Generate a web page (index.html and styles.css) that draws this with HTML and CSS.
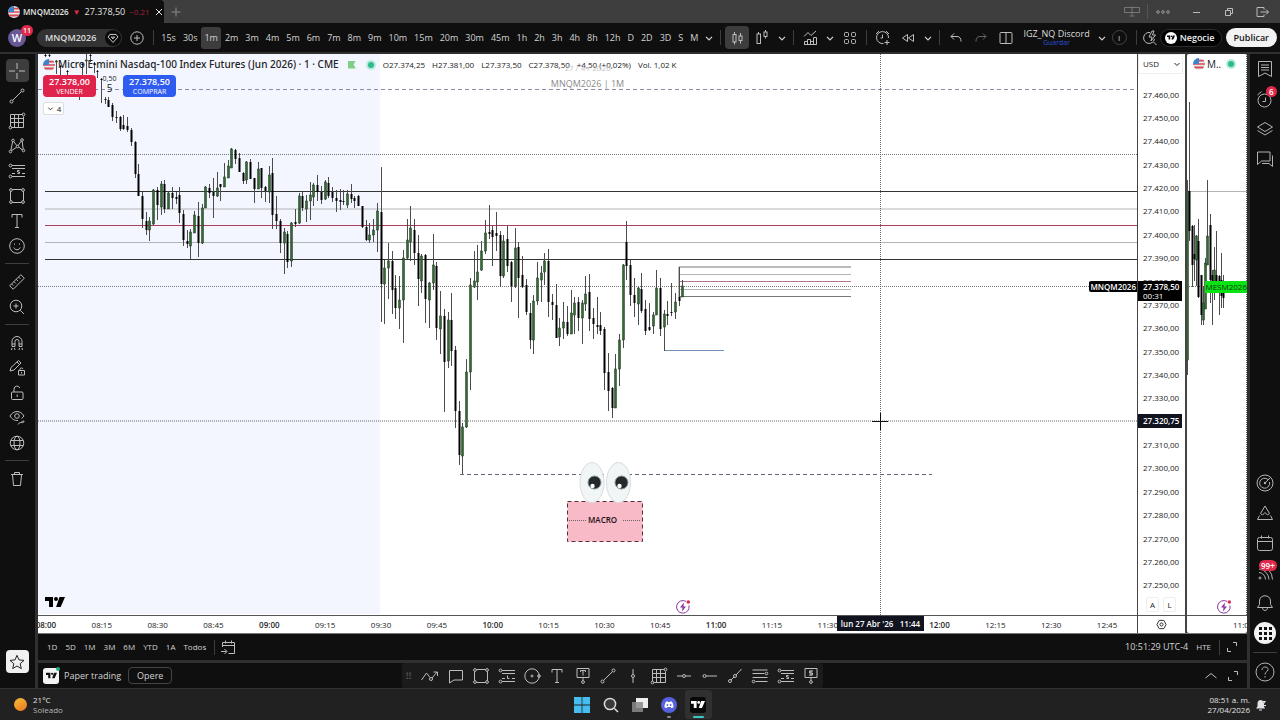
FILE: index.html
```html
<!DOCTYPE html>
<html lang="es">
<head>
<meta charset="utf-8">
<title>MNQM2026 27.378,50</title>
<link rel="stylesheet" href="styles.css">
</head>
<body>
<svg class="sprite" aria-hidden="true">
  <symbol id="cross" viewBox="0 0 18 18"><path d="M9 1v6M9 11v6M1 9h6M11 9h6"/></symbol>
  <symbol id="line" viewBox="0 0 18 18"><circle cx="3.500" cy="14.500" r="1.500"/><circle cx="14.500" cy="3.500" r="1.500"/><path d="M4.600 13.400 13.400 4.600"/></symbol>
  <symbol id="gridtool" viewBox="0 0 18 18"><path d="M2.500 2.500h12M2.500 2.500v12M2.500 6.500h13M2.500 10.500h13M3.500 15.500h12v-11M6.500 2.500v13M10.500 2.500v13"/><circle cx="2.500" cy="15.500" r="1.400"/><circle cx="15.500" cy="2.500" r="1.400"/></symbol>
  <symbol id="pattern" viewBox="0 0 18 18"><circle cx="5" cy="3.500" r="1.300"/><circle cx="14" cy="3" r="1.300"/><circle cx="2.500" cy="14.500" r="1.300"/><circle cx="9.500" cy="9.500" r="1.300"/><circle cx="15.500" cy="13.500" r="1.300"/><path d="M4.600 4.700 2.900 13.200M5.700 4.600l3 3.800M13.200 4.100l-3 4.300M14.200 4.400l1 7.800M3.500 13.600l5-3.300M10.700 10l3.700 3"/></symbol>
  <symbol id="longpos" viewBox="0 0 18 18"><circle cx="2.500" cy="3.500" r="1.400"/><circle cx="2.500" cy="14.500" r="1.400"/><path d="M4 3.500h13M4 14.500h13M4 6.500h13M9.500 8.500v3h2M14 11.500h3M4 11.500h3"/></symbol>
  <symbol id="shortpos" viewBox="0 0 18 18"><circle cx="2.500" cy="3.500" r="1.400"/><circle cx="2.500" cy="14.500" r="1.400"/><path d="M4 3.500h13M4 14.500h13M4 6.500h13M11.500 8.500h-2v1.500h2v1.500h-2M14 11.500h3M4 11.500h3"/></symbol>
  <symbol id="rect" viewBox="0 0 18 18"><circle cx="3" cy="3" r="1.400"/><circle cx="15" cy="3" r="1.400"/><circle cx="3" cy="15" r="1.400"/><circle cx="15" cy="15" r="1.400"/><path d="M4.400 2.500h9.200M4.400 15.500h9.200M2.500 4.400v9.200M15.500 4.400v9.200"/></symbol>
  <symbol id="text" viewBox="0 0 18 18"><path d="M4 5.500v-3h10v3M9 2.500v13M7 15.500h4"/></symbol>
  <symbol id="smile" viewBox="0 0 18 18"><circle cx="9" cy="9" r="7.300"/><path d="M5.800 10.500c1 3 5.400 3 6.400 0M6.500 6.500v1.200M11.500 6.500v1.200"/></symbol>
  <symbol id="ruler" viewBox="0 0 18 18"><path d="M12.800 1.700l3.500 3.500L5.200 16.300l-3.500-3.500zM10.500 4l1.800 1.800M8.200 6.300l1.800 1.800M5.900 8.600l1.800 1.800M3.600 10.900l1.800 1.800"/></symbol>
  <symbol id="zoomin" viewBox="0 0 18 18"><circle cx="8" cy="8" r="5.800"/><path d="M12.200 12.200l3.800 3.800M8 5.500v5M5.500 8h5"/></symbol>
  <symbol id="magnet" viewBox="0 0 18 18"><path d="M4 12.500v-5a5 5 0 0 1 10 0v5h-3v-5a2 2 0 0 0-4 0v5zM4 10h3M11 10h3M4 14l-.5 2M6.500 14l.5 2M11.500 14l-.5 2M14 14l.5 2"/></symbol>
  <symbol id="pencillock" viewBox="0 0 18 18"><path d="M2 12l1-3.500L10.500 1.500l2.500 2.500-7 7zM9 3l2.500 2.500M10.500 11.500h6v4.500h-6zM12 11.500v-1.500a1.600 1.600 0 0 1 3 0M13.500 13v1.500"/></symbol>
  <symbol id="lock" viewBox="0 0 18 18"><rect x="3.500" y="8" width="11.500" height="7.500" rx="1"/><path d="M6 8V5a3 3 0 0 1 5.800-1M9.200 10.500v2.500"/></symbol>
  <symbol id="eye" viewBox="0 0 18 18"><path d="M13.500 9.500c1-.8 1.800-1.500 2.500-2.500-3.500-6-10.500-6-14 0 2 3.500 5 4.700 8 4.500M10 15.500c2-4 6 0 6-3.500-1 0-2 .5-3 1.500"/><circle cx="9" cy="7" r="2.300"/></symbol>
  <symbol id="globe" viewBox="0 0 18 18"><circle cx="9" cy="9" r="6.800"/><ellipse cx="9" cy="9" rx="3" ry="6.800"/><path d="M2.800 6.500h12.400M2.800 11.500h12.400"/></symbol>
  <symbol id="trash" viewBox="0 0 18 18"><path d="M3 4.500h12M6.500 4.500v-2h5v2M4.500 4.500l1 11h7l1-11"/></symbol>
  <symbol id="star" viewBox="0 0 18 18"><path d="M9 2.300l2 4.600 5 .5-3.800 3.300 1.100 4.900L9 13l-4.300 2.600 1.100-4.900L2 7.400l5-.5z"/></symbol>
  <symbol id="plusc" viewBox="0 0 18 18"><circle cx="9" cy="9" r="6.200"/><path d="M9 6v6M6 9h6"/></symbol>
  <symbol id="chev" viewBox="0 0 10 10"><path d="M2.500 4 5 6.500 7.500 4"/></symbol>
  <symbol id="candles" viewBox="0 0 18 18"><path d="M6.500 3v3M6.500 12.500v3M12.500 4v3M12.500 11.500v3"/><rect x="5" y="5.500" width="3" height="7.500"/><rect x="11" y="7" width="3" height="4.500"/></symbol>
  <symbol id="candles2" viewBox="0 0 18 18"><path d="M5.500 3v2M12.500 1v2M12.500 7.500v2"/><rect x="4" y="5" width="3.500" height="9.500"/><rect x="11" y="3" width="3" height="4.500"/></symbol>
  <symbol id="indic" viewBox="0 0 18 18"><path d="M3 7.500 7 3.500l3 3 5-4.500M3.500 15.500v-3h3v3M6.500 15.500v-5h3v5M9.500 12.500h3v3M12.500 15.500v-7h3v7zM3 15.500h12.500"/></symbol>
  <symbol id="tiles" viewBox="0 0 18 18"><rect x="3.500" y="3.500" width="4" height="4" rx="1"/><rect x="10.500" y="3.500" width="4" height="4" rx="1"/><rect x="3.500" y="10.500" width="4" height="4" rx="1"/><rect x="10.500" y="10.500" width="4" height="4" rx="1"/></symbol>
  <symbol id="alertplus" viewBox="0 0 18 18"><path d="M14.500 9A6 6 0 1 0 9.500 14.500M8.500 5.500v3.500h-2M2 5l3-3M12 2l3 3M13 11v5M10.500 13.500h5"/></symbol>
  <symbol id="rewind" viewBox="0 0 18 18"><path d="M8.500 5.500v7l-5-3.500zM14.500 5.500v7l-5-3.500z"/></symbol>
  <symbol id="undo" viewBox="0 0 18 18"><path d="M7 4.500 4 7.500l3 3M4 7.500h6c3 0 4 2 4 5"/></symbol>
  <symbol id="redo" viewBox="0 0 18 18"><path d="M11 4.500l3 3-3 3M14 7.500H8c-3 0-4 2-4 5"/></symbol>
  <symbol id="split" viewBox="0 0 18 18"><rect x="3" y="3.500" width="12" height="11" rx="1"/><path d="M9 3.500v11"/></symbol>
  <symbol id="quick" viewBox="0 0 18 18"><path d="M9 3.500A5.500 5.500 0 1 0 13.500 10M12.500 13l3 3M11 2 8 8h3l-1 4 4.500-6h-3l1.500-4z"/></symbol>
  <symbol id="tv" viewBox="0 0 20 12"><path class="solid" d="M0 1h8v10H4V5H0zM14.500 1H20l-4.300 10h-4.600z"/><circle class="solid" cx="11" cy="3" r="2"/></symbol>
  <symbol id="flag" viewBox="0 0 14 14"><circle class="f-w" cx="7" cy="7" r="7"/><path class="f-r" d="M7 2h5a7 7 0 0 1 1.300 2H7zM7 6h7v2H0V7h7zM1 10h12a7 7 0 0 1-1.600 2.300H2.600A7 7 0 0 1 1 10z"/><path class="f-b" d="M7 0v7H0A7 7 0 0 1 7 0z"/></symbol>
  <symbol id="book" viewBox="0 0 18 18"><path d="M2.500 1.500h13v15L9 13l-6.500 3.500zM5 5h8M5 7.500h8M5 10h8"/></symbol>
  <symbol id="alarm" viewBox="0 0 18 18"><circle cx="8.500" cy="10.500" r="6.500"/><path d="M9.500 7.500v4h-3M1.500 5l4-3.500"/></symbol>
  <symbol id="layers" viewBox="0 0 18 18"><path d="M9 2.500l7.500 4.500L9 11.500 1.500 7zM1.500 10.500 9 15l7.500-4.500"/></symbol>
  <symbol id="chat" viewBox="0 0 18 18"><path d="M1.500 2h12.500v9H5.500l-4 3.500zM16.500 5.500v11l-3.500-3H6"/></symbol>
  <symbol id="target" viewBox="0 0 18 18"><circle cx="9" cy="9" r="8"/><path d="M12 5.500A5 5 0 1 0 13.500 8M9 9l5.500-5.500"/><circle class="solid" cx="9" cy="9" r="1.200"/></symbol>
  <symbol id="hill" viewBox="0 0 18 18"><path d="M4.500 9.500 9 2l4.500 7.500-2 1.500-2.500-2.500L6.500 11zM3.500 11.500l-2 4h15l-2-4"/></symbol>
  <symbol id="cal" viewBox="0 0 18 18"><rect x="1.500" y="3.500" width="15" height="13" rx="2"/><path d="M1.500 7.500h15M5.500 1.500v3M12.500 1.500v3"/></symbol>
  <symbol id="rss" viewBox="0 0 18 18"><path d="M3 8.500a7 7 0 0 1 6.500 7M3 5a11 11 0 0 1 10 10.500M3 1.500a14 14 0 0 1 13.500 14"/><circle cx="4" cy="14" r="1"/></symbol>
  <symbol id="bell" viewBox="0 0 18 18"><path d="M1.500 13.500h15l-2-3V7c0-7-11-7-11 0v3.500zM6.500 13.500c0 4 5 4 5 0"/></symbol>
  <symbol id="dots9" viewBox="0 0 22 22"><path class="solid" d="M5 5h3v3H5zM10 5h3v3h-3zM15 5h3v3h-3zM5 10h3v3H5zM10 10h3v3h-3zM15 10h3v3h-3zM5 15h3v3H5zM10 15h3v3h-3zM15 15h3v3h-3z"/></symbol>
  <symbol id="help" viewBox="0 0 20 20"><circle cx="10" cy="10" r="9"/><path d="M7 8c0-4 6-4 6-.5C13 10 10 9.500 10 12.500M10 14v1.500"/></symbol>
  <symbol id="goto" viewBox="0 0 18 18"><path d="M3.500 9V4.500h12v11h-6M3.500 7.500h12M6.500 2.500v3M12.500 2.500v3M2 13.500h5.500M5.500 11l2.500 2.500L5.500 16"/></symbol>
  <symbol id="expand" viewBox="0 0 14 14"><path d="M8 2.500h3.500V6M2.500 8v3.500H6"/></symbol>
  <symbol id="up" viewBox="0 0 14 14"><path d="M1.500 9 7 4.500 12.500 9"/></symbol>
  <symbol id="zigzag" viewBox="0 0 18 18"><path d="M.5 13 5.500 6l3.500 4.500M11 11l5-6M12.500 5H16.500v4"/><circle cx="10" cy="12" r="1.500"/></symbol>
  <symbol id="note" viewBox="0 0 18 18"><path d="M2.500 3.500h13v9.500H7L2.500 16z"/></symbol>
  <symbol id="circ" viewBox="0 0 18 18"><circle cx="9" cy="9" r="7.200"/><circle cx="9" cy="9" r="1"/><circle cx="16" cy="9" r="1.300"/></symbol>
  <symbol id="callout" viewBox="0 0 18 18"><path d="M3 1.500h12v9H3zM6.500 5V3.500h5V5M9 3.500v5M9 10.500v3"/><circle cx="9" cy="15" r="1.400"/></symbol>
  <symbol id="vline" viewBox="0 0 18 18"><circle cx="9" cy="9" r="1.500"/><path d="M9 2v5.500M9 10.500V16"/></symbol>
  <symbol id="hline" viewBox="0 0 18 18"><circle cx="9" cy="9" r="1.500"/><path d="M2 9h5.500M10.500 9H16"/></symbol>
  <symbol id="hray" viewBox="0 0 18 18"><circle cx="3.500" cy="9" r="1.500"/><path d="M5 9h11"/></symbol>
  <symbol id="ray" viewBox="0 0 18 18"><circle cx="4" cy="14" r="1.500"/><circle cx="9" cy="9" r="1.500"/><path d="M5 13l3-3M10 8l5.500-6"/></symbol>
  <symbol id="fib" viewBox="0 0 18 18"><path d="M1.500 3h15M1.500 6.500h12M1.500 10.500h15M4.500 14.500h12"/><circle cx="15.500" cy="6.500" r="1.300"/><circle cx="2.500" cy="14.500" r="1.300"/></symbol>
  <symbol id="price" viewBox="0 0 18 18"><path d="M3 1.500h12v9H3zM11 4H7.500v2h3v2H7M9 3v6M9 10.500v3"/><circle cx="9" cy="15" r="1.400"/></symbol>
  <symbol id="bolt" viewBox="0 0 16 16"><path d="M11 2.400A6.300 6.300 0 1 0 14 6.500"/><path class="bolt" d="M9 3.500 5 8.500h2.500L7 12.500l4-5H8.500z"/><circle class="reddot" cx="13.300" cy="3" r="1.800"/></symbol>
</svg>

<header class="tabbar">
  <button class="tab"><svg class="flag"><use href="#flag"/></svg><b>MNQM2026</b><i class="down">▼</i><span>27.378,50</span><span class="fade">−0.21</span><svg class="x" viewBox="0 0 10 10"><path d="M2 2l6 6M8 2 2 8"/></svg></button>
  <button class="newtab" aria-label="Nueva pestaña"><svg viewBox="0 0 10 10"><path d="M5 .5v9M.5 5h9"/></svg></button>
  <div class="winctl">
    <svg class="wi" viewBox="0 0 16 12"><path d="M.5 1.500h15v5H.5zM8 .500v9M5.500 10h5"/></svg><i class="vdiv"></i>
    <svg class="wi dim" viewBox="0 0 16 12"><circle cx="3" cy="6" r="1.300"/><circle cx="8" cy="6" r="1.300"/><circle cx="13" cy="6" r="1.300"/></svg>
    <svg class="wi lite" viewBox="0 0 16 12"><path d="M5 6.500h7"/></svg>
    <svg class="wi lite" viewBox="0 0 16 12"><path d="M4.500 4.500h5v5h-5zM6.500 4.500v-2h5v5h-2"/></svg>
    <svg class="wi lite" viewBox="0 0 16 12"><path d="M10 3.500v-2H3v9h7v-2M6.500 6h8M12 3.500 14.500 6 12 8.500"/></svg>
  </div>
</header>

<nav class="toolbar">
  <div class="avatar">W<span class="badge">11</span></div>
  <button class="pill">MNQM2026<span class="gem"><svg viewBox="0 0 18 18"><path d="M5.500 5h7l2 3L9 14 3.500 8zM7 8l2 2 2-2z"/></svg></span></button>
  <button class="ib plus" aria-label="Comparar"><svg><use href="#plusc"/></svg></button>
  <i class="vdiv"></i>
  <div class="frames">
    <button>15s</button><button>30s</button><button class="on">1m</button><button>2m</button><button>3m</button><button>4m</button><button>5m</button><button>6m</button><button>7m</button><button>8m</button><button>9m</button><button>10m</button><button>15m</button><button>20m</button><button>30m</button><button>45m</button><button>1h</button><button>2h</button><button>3h</button><button>4h</button><button>8h</button><button>12h</button><button>D</button><button>2D</button><button>3D</button><button>S</button><button>M</button><button class="cv" aria-label="Más"><svg><use href="#chev"/></svg></button>
  </div>
  <i class="vdiv"></i>
  <button class="ib on" aria-label="Velas"><svg><use href="#candles"/></svg></button>
  <button class="ib" aria-label="Tipo"><svg><use href="#candles2"/></svg></button>
  <button class="cv" aria-label="Más"><svg><use href="#chev"/></svg></button>
  <i class="vdiv"></i>
  <button class="ib" aria-label="Indicadores"><svg><use href="#indic"/></svg></button>
  <button class="cv" aria-label="Más"><svg><use href="#chev"/></svg></button>
  <button class="ib" aria-label="Plantillas"><svg><use href="#tiles"/></svg></button>
  <i class="vdiv"></i>
  <button class="ib" aria-label="Alerta"><svg><use href="#alertplus"/></svg></button>
  <button class="ib" aria-label="Repetir"><svg><use href="#rewind"/></svg></button>
  <button class="cv" aria-label="Más"><svg><use href="#chev"/></svg></button>
  <i class="vdiv"></i>
  <button class="ib" aria-label="Deshacer"><svg><use href="#undo"/></svg></button>
  <button class="ib dim" aria-label="Rehacer"><svg><use href="#redo"/></svg></button>
  <button class="ib" aria-label="Diseño"><svg><use href="#split"/></svg></button>
  <button class="layout"><span>IGZ_NQ Discord</span><small>Guardar</small></button>
  <button class="cv" aria-label="Más"><svg><use href="#chev"/></svg></button>
  <button class="ring">I</button>
  <i class="vdiv"></i>
  <button class="ib slim" aria-label="Buscar"><svg><use href="#quick"/></svg></button>
  <button class="trade"><span class="tvc"><svg><use href="#tv"/></svg></span>Negocie</button>
  <button class="publish">Publicar</button>
</nav>

<div class="body">
  <aside class="left">
    <button class="ib on" aria-label="Cursor"><svg><use href="#cross"/></svg></button>
    <button class="ib" aria-label="Línea"><svg><use href="#line"/></svg></button>
    <button class="ib" aria-label="Gann"><svg><use href="#gridtool"/></svg></button>
    <button class="ib" aria-label="Patrones"><svg><use href="#pattern"/></svg></button>
    <button class="ib" aria-label="Posición"><svg><use href="#shortpos"/></svg></button>
    <button class="ib" aria-label="Rectángulo"><svg><use href="#rect"/></svg></button>
    <button class="ib" aria-label="Texto"><svg><use href="#text"/></svg></button>
    <button class="ib" aria-label="Iconos"><svg><use href="#smile"/></svg></button>
    <i class="hdiv"></i>
    <button class="ib" aria-label="Regla"><svg><use href="#ruler"/></svg></button>
    <button class="ib" aria-label="Acercar"><svg><use href="#zoomin"/></svg></button>
    <i class="hdiv"></i>
    <button class="ib" aria-label="Imán"><svg><use href="#magnet"/></svg></button>
    <button class="ib" aria-label="Dibujar"><svg><use href="#pencillock"/></svg></button>
    <button class="ib" aria-label="Bloquear"><svg><use href="#lock"/></svg></button>
    <button class="ib" aria-label="Ocultar"><svg><use href="#eye"/></svg></button>
    <button class="ib" aria-label="Sincronizar"><svg><use href="#globe"/></svg></button>
    <i class="hdiv"></i>
    <button class="ib" aria-label="Eliminar"><svg><use href="#trash"/></svg></button>
    <button class="ib fav" aria-label="Favoritos"><svg><use href="#star"/></svg></button>
  </aside>

  <main class="center">
    <div class="charts">
      <section class="chart">
        <div class="plot">
          <svg class="canvas" viewBox="38 54 1099 561" preserveAspectRatio="none">
            <rect class="session" x="38" y="54" width="342" height="560"/>
            <path class="dash" d="M38 89.500H1134"/>
            <path class="dots" d="M38 154.500H1137M38 286.500H1137"/>
            <path class="lv" d="M45 191.500H1137M45 259.500H1137"/>
            <path class="lv gray" d="M45 209H1137M45 242.500H1137"/>
            <path class="lv red" d="M45 225.500H1137"/>
            <path class="lv mid" d="M679 267H851M679 296.500H851M679 267V297"/>
            <path class="lv gray" d="M679 274.500H851M679 289.500H851"/>
            <path class="lv red soft" d="M679 281.500H851"/>
            <path class="lv blue" d="M664 350.500H724"/>
            <g id="main-candles"></g>
            <path class="dash low" d="M460 474.500H932"/>
            <rect class="macro" x="567.500" y="501.500" width="75" height="40"/>
            <path class="dots dk" d="M569 520.500H586M623 520.500H641"/>
            <g class="eyes"><ellipse cx="592" cy="482.500" rx="12" ry="20"/><ellipse cx="618.500" cy="482.500" rx="12" ry="20"/>
              <circle class="iris" cx="594.500" cy="482.500" r="6.500"/><circle class="iris" cx="621.500" cy="482.500" r="6.500"/>
              <circle class="glint" cx="592.500" cy="486" r="2.200"/><circle class="glint" cx="619.500" cy="486" r="2.200"/></g>
            <path class="dots dk" d="M880.500 54V615M38 421H1137"/>
            <path class="cursor" d="M872 421.500H888M880.500 413V430"/>
          </svg>
          <div class="legend">
            <div class="row"><svg class="flag"><use href="#flag"/></svg><h1>Micro E-mini Nasdaq-100 Index Futures (Jun 2026) · 1 · CME</h1><i class="gflag"></i><i class="live"></i>
              <p class="ohlc"><span>O27.374,25</span><span>H27.381,00</span><span>L27.373,50</span><span>C27.378,50</span><span>+4,50 (+0,02%)</span><span>Vol. 1,02 K</span></p></div>
            <div class="row deal"><button class="sell"><b>27.378,00</b>VENDER</button><span class="spread"><small>0,50</small>5</span><button class="buy"><b>27.378,50</b>COMPRAR</button></div>
            <button class="count"><svg><use href="#chev"/></svg>4</button>
          </div>
          <div class="mark"><span class="faint">27 / 4 / 2026</span><span>MNQM2026 | 1M</span></div>
          <span class="macro-t">MACRO</span>
          <svg class="logo"><use href="#tv"/></svg>
          <svg class="event"><use href="#bolt"/></svg>
          <span class="symtag">MNQM2026</span>
        </div>
        <div class="prices">
          <label class="cur"><select aria-label="Divisa"><option>USD</option></select><svg><use href="#chev"/></svg></label>
          <ol class="scale"><li>27.460,00</li><li>27.450,00</li><li>27.440,00</li><li>27.430,00</li><li>27.420,00</li><li>27.410,00</li><li>27.400,00</li><li>27.390,00</li><li>27.380,00</li><li>27.370,00</li><li>27.360,00</li><li>27.350,00</li><li>27.340,00</li><li>27.330,00</li><li></li><li>27.310,00</li><li>27.300,00</li><li>27.290,00</li><li>27.280,00</li><li>27.270,00</li><li>27.260,00</li><li>27.250,00</li></ol>
          <div class="al"><button>A</button><button>L</button></div>
          <span class="last"><b>27.378,50</b>00:31</span>
          <span class="hair">27.320,75</span>
        </div>
        <div class="times">
          <ol><li class="h">08:00</li><li>08:15</li><li>08:30</li><li>08:45</li><li class="h">09:00</li><li>09:15</li><li>09:30</li><li>09:45</li><li class="h">10:00</li><li>10:15</li><li>10:30</li><li>10:45</li><li class="h">11:00</li><li>11:15</li><li>11:30</li><li></li><li class="h">12:00</li><li>12:15</li><li>12:30</li><li>12:45</li></ol>
          <span class="hairtime">lun 27 Abr '26 &nbsp; 11:44</span>
        </div>
        <button class="gear" aria-label="Ajustes"><svg viewBox="0 0 12 12"><path d="M3.500 1.500h5L11 6l-2.500 4.500h-5L1 6z"/><circle cx="6" cy="6" r="1.700"/></svg></button>
      </section>
      <section class="chart2">
        <div class="plot">
          <svg class="canvas" viewBox="1187 54 60 561" preserveAspectRatio="none"><path class="lv gray" d="M1187 191.500H1247"/><path class="dots" d="M1187 286.500H1247"/><g id="side-candles"></g><path class="dots dk" d="M1246.500 54V615"/></svg>
          <div class="legend2"><svg class="flag"><use href="#flag"/></svg><b>M..</b><i class="live"></i></div>
          <span class="mes">MESM2026</span>
          <svg class="event"><use href="#bolt"/></svg>
        </div>
        <div class="times2">11:00</div>
      </section>
    </div>
    <div class="ranges">
      <button>1D</button><button>5D</button><button>1M</button><button>3M</button><button>6M</button><button>YTD</button><button>1A</button><button>Todos</button><i class="vdiv"></i>
      <button class="ib" aria-label="Ir a"><svg><use href="#goto"/></svg></button>
      <span class="clock">10:51:29 UTC-4</span><button class="hte">HTE</button><i class="vdiv"></i><button class="sm" aria-label="Ampliar"><svg><use href="#expand"/></svg></button>
    </div>
    <div class="broker">
      <span class="brand"><svg><use href="#tv"/></svg></span><span class="bname">Paper trading</span><button class="operate">Opere</button>
      <div class="favbar">
        <i class="grip">⠿</i>
        <button aria-label="Zigzag"><svg><use href="#zigzag"/></svg></button><button aria-label="Nota"><svg><use href="#note"/></svg></button><button aria-label="Rectángulo"><svg><use href="#rect"/></svg></button><button aria-label="Larga"><svg><use href="#longpos"/></svg></button><button aria-label="Círculo"><svg><use href="#circ"/></svg></button><button aria-label="Texto"><svg><use href="#text"/></svg></button><button aria-label="Globo"><svg><use href="#callout"/></svg></button><button aria-label="Línea"><svg><use href="#line"/></svg></button><button aria-label="Vertical"><svg><use href="#vline"/></svg></button><button aria-label="Gann"><svg><use href="#gridtool"/></svg></button><button aria-label="Horizontal"><svg><use href="#hline"/></svg></button><button aria-label="Rayo horizontal"><svg><use href="#hray"/></svg></button><button aria-label="Rayo"><svg><use href="#ray"/></svg></button><button aria-label="Fibonacci"><svg><use href="#fib"/></svg></button><button aria-label="Corta"><svg><use href="#shortpos"/></svg></button><button aria-label="Precio"><svg><use href="#price"/></svg></button>
      </div>
      <button class="sm end" aria-label="Abrir"><svg><use href="#up"/></svg></button><button class="sm" aria-label="Ampliar"><svg><use href="#expand"/></svg></button>
    </div>
  </main>

  <aside class="right">
    <button aria-label="Lista"><svg><use href="#book"/></svg></button>
    <button aria-label="Alertas"><svg><use href="#alarm"/></svg><span class="badge">6</span></button>
    <button aria-label="Capas"><svg><use href="#layers"/></svg></button>
    <button aria-label="Chat"><svg><use href="#chat"/></svg></button>
    <button class="push" aria-label="Filtros"><svg><use href="#target"/></svg></button>
    <button aria-label="Pine"><svg><use href="#hill"/></svg></button>
    <button aria-label="Calendario"><svg><use href="#cal"/></svg></button>
    <button aria-label="Noticias"><svg><use href="#rss"/></svg><span class="badge wide">99+</span></button>
    <button aria-label="Avisos"><svg><use href="#bell"/></svg></button>
    <button class="apps" aria-label="Productos"><svg><use href="#dots9"/></svg></button>
    <i class="hdiv"></i>
    <button class="helpb" aria-label="Ayuda"><svg><use href="#help"/></svg></button>
  </aside>
</div>

<footer class="taskbar">
  <div class="weather"><i class="sun"></i><p>21°C<br><span>Soleado</span></p></div>
  <div class="apps-row">
    <button aria-label="Inicio"><svg viewBox="0 0 16 16"><path class="win" d="M0 0h7.600v7.600H0zM8.400 0H16v7.600H8.400zM0 8.400h7.600V16H0zM8.400 8.400H16V16H8.400z"/></svg></button>
    <button aria-label="Buscar"><svg viewBox="0 0 16 16"><circle class="mag" cx="7" cy="7" r="5.600"/><path class="mag" d="M11.500 11.500l3.500 3.500"/></svg></button>
    <button aria-label="Vistas"><svg viewBox="0 0 16 16"><path class="tv1" d="M4 1h12v10H4z"/><path class="tv2" d="M0 5h11v10H0z"/></svg></button>
    <button class="run" aria-label="Discord"><svg viewBox="0 0 16 16"><circle class="disc" cx="8" cy="8" r="8"/><path class="face" d="M5 4.800 6.500 4.300l.5.700h2l.5-.7 1.500.5c1 1.500 1.600 3.500 1.500 5.400l-2 1-.8-1.200H6.300l-.8 1.200-2-1C3.400 8.300 4 6.300 5 4.800z"/><circle class="disc" cx="6.400" cy="8" r=".9"/><circle class="disc" cx="9.600" cy="8" r=".9"/></svg></button>
    <button class="run active" aria-label="TradingView"><span><svg><use href="#tv"/></svg></span></button>
  </div>
  <div class="tray"><p>08:51 a. m.<br>27/04/2026</p><svg viewBox="0 0 12 12"><path class="solid" d="M1 9.500h9L9 7.500V4C8 0 3 0 2.500 4v3.500zM4 10.500h3v1H4z"/><path class="z" d="M6 2.500h4.500L7 6.500h4"/></svg></div>
</footer>
<script src="chart.js"></script>
</body>
</html>
```
FILE: styles.css
```css
:root { --ink: #0f0f0f; --line: #303030; --icon: #bdbdbd; --text: #d3d3d3; }
* { box-sizing: border-box; }
body { margin: 0; height: 100vh; display: flex; flex-direction: column; overflow: hidden; background: var(--line); color: var(--text); font: 10px/12px "Trebuchet MS", "Open Sans", "Noto Sans", sans-serif; }
button, select { font: inherit; color: inherit; background: none; border: 0; padding: 0; margin: 0; }
button { display: flex; align-items: center; justify-content: center; white-space: nowrap; }
p, ol, h1 { margin: 0; padding: 0; }
ol { list-style: none; }
i { font-style: normal; }
svg { display: block; fill: none; stroke: currentColor; stroke-width: 1; }
.sprite { position: absolute; width: 0; height: 0; }
.solid { fill: currentColor; stroke: none; }
.f-w { fill: #e9e9ee; stroke: none; }
.f-r { fill: #d94a55; stroke: none; }
.f-b { fill: #3c83c9; stroke: none; }
.flag { width: 12px; height: 12px; flex: none; }
.vdiv { width: 1px; height: 15px; background: #3d3d3d; margin: 0 3px; flex: none; }
.hdiv { width: 24px; height: 1px; background: #3d3d3d; flex: none; }
.badge { position: absolute; background: #e0294a; color: #fff; border-radius: 6px; font-weight: 600; font-size: 8px; line-height: 11px; padding: 0 3px; }

.tabbar { display: flex; height: 23px; background: #3e3e3e; flex: none; }
.tab { width: 164px; gap: 4px; padding: 0 4px 0 8px; background: var(--ink); justify-content: flex-start; color: #e4e4e4; border-radius: 0 4px 0 0; }
.tab .flag { margin-right: -1px; }
.tab b { font-weight: 600; font-size: 8px; }
.tab span { font-size: 9px; }
.down { color: #e0294a; font-size: 8px; }
.tab .fade { color: #a02238; font-size: 8px; }
.tab .x { margin-left: auto; width: 10px; height: 10px; flex: none; }
.newtab { width: 23px; color: #8b8b8b; }
.newtab svg { width: 10px; height: 10px; }
.winctl { margin-left: auto; display: flex; align-items: center; gap: 17px; padding-right: 10px; }
.winctl .vdiv { margin: 0 -10px; background: #555; }
.wi { width: 16px; height: 12px; color: #777; }
.wi.dim { color: #999; }
.wi.lite { color: #bbb; }

.toolbar { display: flex; align-items: center; gap: 1px; height: 29px; background: var(--ink); padding: 0 3px 0 8px; flex: none; }
.avatar { position: relative; width: 18px; height: 18px; border-radius: 9px; background: #6a5796; color: #fff; font-weight: 600; font-size: 11px; line-height: 18px; text-align: center; }
.avatar .badge { left: 13px; top: -4px; padding: 0 2px; font-size: 7px; }
.pill { height: 18px; margin-left: 10px; padding: 0 1px 0 8px; gap: 9px; border-radius: 9px; background: #333; font-weight: 600; font-size: 9px; color: #ddd; }
.gem { width: 16px; height: 16px; border-radius: 8px; background: #0c0c0c; }
.gem svg { width: 16px; height: 16px; }
.ib { width: 24px; height: 23px; border-radius: 4px; color: var(--icon); flex: none; }
.ib svg { width: 18px; height: 18px; }
.ib.on { background: #3d3d3d; }
.ib.dim { color: #666; }
.slim { width: 18px; }
.plus { margin-left: 2px; }
.frames { flex: 1; display: flex; justify-content: space-between; align-items: center; }
.frames button { height: 22px; padding: 0 3px; border-radius: 3px; font-weight: 500; font-size: 9px; }
.frames .on { background: #3d3d3d; }
.cv, .frames .cv { width: 14px; padding: 0; flex: none; }
.cv svg { width: 12px; height: 12px; }
.layout { flex-direction: column; font-size: 9px; line-height: 10px; padding: 0 4px; color: #ddd; }
.layout small { font-size: 7px; line-height: 7px; color: #2a4fd6; }
.ring { width: 15px; height: 15px; border: 1px solid #444; border-radius: 8px; font-size: 8px; margin: 0 5px 0 2px; }
.trade { height: 18px; gap: 3px; padding: 0 6px 0 4px; border-radius: 9px; background: #000; border: 1px solid #2c2c2c; font-weight: 600; font-size: 9px; color: #eee; }
.tvc { width: 12px; height: 12px; border-radius: 6px; background: #fff; color: #000; display: flex; align-items: center; justify-content: center; }
.tvc svg { width: 8px; height: 5px; }
.publish { height: 19px; margin-left: 3px; padding: 0 8px; border-radius: 10px; background: #f2f2f2; color: #151515; font-weight: 600; font-size: 9px; }

.body { flex: 1; display: flex; gap: 3px; min-height: 0; padding-top: 2px; }
.left { width: 35px; background: var(--ink); display: flex; flex-direction: column; align-items: center; padding: 5px 1px 0 0; gap: 2px; }
.left .ib { width: 23px; }
.left .hdiv { margin: 4px 0; }
.left .fav { margin: auto 0 15px; background: #f0f0f0; color: #222; }
.right { width: 30px; background: var(--ink); display: flex; flex-direction: column; align-items: center; padding: 0 0 1px; }
.right button { position: relative; width: 30px; height: 30px; flex: none; color: #b4b4b4; }
.right svg { width: 18px; height: 18px; }
.right .badge { left: 16px; top: 2px; color: #fff; }
.right .wide { left: 9px; padding: 0 2px; }
.right .push { margin-top: auto; }
.right .apps svg { width: 22px; height: 22px; border-radius: 11px; background: #f2f2f2; color: #111; }
.right .hdiv { margin: 4px 0; }
.right .helpb svg { width: 20px; height: 20px; }

.center { flex: 1; display: flex; flex-direction: column; min-width: 0; }
.charts { flex: 1; display: flex; gap: 2px; min-height: 0; border-bottom: 1px solid #777; background: #444; }
.chart { flex: 1; display: grid; grid-template-columns: 1fr 48px; grid-template-rows: 1fr 17px; min-width: 0; background: #fff; color: #222; }
.plot { position: relative; min-width: 0; min-height: 0; overflow: hidden; border-bottom: 1px solid #555; }
.canvas { position: absolute; inset: 0; width: 100%; height: 100%; }
.session { fill: #f3f6ff; stroke: none; }
.dash { stroke: #8b8bb0; stroke-dasharray: 4 3; }
.dash.low { stroke: #64667e; }
.dots { stroke: #777; stroke-dasharray: 1 1; }
.dots.dk { stroke: #666; }
.lv { stroke: #333; }
.lv.gray { stroke: #b4b4b6; }
.lv.red { stroke: #a8405c; }
.lv.soft { stroke: #b0788a; }
.lv.mid { stroke: #777; }
.lv.blue { stroke: #7390bb; }
.wick { stroke: #4c4c4c; }
.bear { fill: #000; stroke: none; }
.bull { fill: #2e6b2e; stroke: #223322; stroke-width: .5; }
.macro { fill: #f7bac6; stroke: #5b2d3a; stroke-dasharray: 4 3; }
.eyes ellipse { fill: #f2f5f6; stroke: #d5dde0; }
.eyes .iris { fill: #26292c; stroke: #84949b; }
.eyes .glint { fill: #fff; stroke: none; }
.cursor { stroke: #111; }
.legend { position: absolute; left: 5px; top: 4px; }
.row { display: flex; align-items: center; height: 13px; white-space: nowrap; }
.row h1 { font-family: "Trebuchet MS", "Noto Sans", sans-serif; font-size: 10px; line-height: 13px; font-weight: 500; margin-left: 3px; color: #222; }
.gflag { width: 8px; height: 8px; background: #7fcf86; margin-left: 9px; clip-path: polygon(0 0, 100% 0, 75% 50%, 100% 100%, 0 100%); }
.live { width: 6px; height: 6px; margin: 0 9px 0 12px; border-radius: 50%; background: #2fb98f; box-shadow: 0 0 0 2px #b9ebdb; }
.ohlc { display: flex; gap: 7px; font-size: 8px; color: #222; }
.deal { height: 22px; margin-top: 4px; align-items: stretch; }
.deal button { width: 53px; border-radius: 4px; flex-direction: column; color: #fff; font-size: 7px; line-height: 9px; }
.deal b { font-size: 9px; line-height: 10px; font-weight: 600; }
.sell { background: #e0234c; }
.buy { background: #2f5cf0; }
.spread { width: 27px; display: flex; flex-direction: column; align-items: center; line-height: 12px; }
.spread small { font-size: 7px; line-height: 7px; }
.count { width: 21px; height: 13px; margin-top: 5px; gap: 2px; background: #fff; border: 1px solid #ddd; border-radius: 2px; font-size: 8px; }
.count svg { width: 9px; height: 9px; }
.mark { position: absolute; left: 0; right: 0; top: 8px; display: flex; flex-direction: column; align-items: center; gap: 4px; font-size: 9px; color: #8a8a8a; }
.mark .faint { font-size: 8px; color: #c6c6c6; }
.macro-t { position: absolute; left: 550px; top: 460px; font-size: 8px; font-weight: 600; color: #1a1118; }
.logo { position: absolute; left: 7px; bottom: 7px; width: 20px; height: 12px; color: #000; }
.event { position: absolute; left: 637px; bottom: 0; width: 16px; height: 16px; color: #8c35a5; }
.bolt { fill: #8c35a5; stroke: none; }
.reddot { fill: #d62d50; stroke: none; }
.symtag { position: absolute; right: 0; top: 227px; padding: 0 1px; font-size: 8px; line-height: 11px; font-weight: 600; color: #fff; background: #000; border-radius: 2px 0 0 2px; }
.prices { position: relative; display: flex; flex-direction: column; border-left: 1px solid #444; border-bottom: 1px solid #555; font-size: 8px; min-height: 0; }
.cur { display: flex; align-items: center; height: 20px; margin-right: 2px; border: 1px solid #eee; flex: none; }
.cur select { appearance: none; flex: 1; min-width: 0; padding-left: 4px; font-size: 8px; }
.cur svg { width: 10px; height: 10px; }
.scale { flex: 1; display: grid; grid-template-rows: repeat(22, 1fr); margin-top: 9px; min-height: 0; }
.scale li { display: flex; align-items: center; padding-left: 5px; }
.al { display: flex; gap: 4px; height: 15px; padding-left: 8px; margin-bottom: 3px; flex: none; }
.al button { width: 13px; border: 1px solid #eee; border-radius: 2px; font-size: 8px; }
.last, .hair { position: absolute; left: 0; right: 3px; padding-left: 5px; color: #fff; background: #000; }
.last { top: 227px; font-size: 8px; line-height: 9px; padding-top: 1px; padding-bottom: 1px; }
.last b { display: block; font-weight: 600; }
.hair { top: 360px; background: #11131f; line-height: 14px; font-weight: 600; }
.times { position: relative; overflow: hidden; }
.times ol { display: grid; grid-template-columns: repeat(20, 1fr); margin: 0 2px 0 -20px; }
.times li { text-align: center; font-size: 8px; line-height: 17px; }
.times .h { font-weight: 600; }
.hairtime { position: absolute; left: 799px; top: 0; width: 87px; background: #11131f; color: #fff; font-size: 8px; line-height: 15px; text-align: center; white-space: nowrap; font-weight: 600; }
.gear { border-left: 1px solid #444; }
.gear svg { width: 11px; height: 11px; }
.chart2 { width: 60px; display: grid; grid-template-rows: 1fr 17px; background: #fff; color: #222; border-radius: 2px; overflow: hidden; }
.legend2 { position: absolute; left: 6px; top: 4px; display: flex; align-items: center; gap: 2px; }
.legend2 b { font-weight: 500; }
.legend2 .live { margin: 0 0 0 5px; }
.mes { position: absolute; right: 0; top: 227px; font-size: 8px; line-height: 12px; background: #0be414; color: #0b3a10; }
.chart2 .event { left: 29px; }
.times2 { overflow: hidden; padding-left: 46px; font-size: 8px; line-height: 17px; }

.ranges { display: flex; align-items: center; height: 26px; padding: 0 4px 0 5px; background: var(--ink); font-size: 9px; flex: none; }
.ranges > button:not(.ib):not(.sm) { padding: 0 4px; font-size: 8px; font-weight: 500; }
.ranges .clock { margin-left: auto; margin-right: 4px; }
.ranges > .vdiv { margin-left: 4px; margin-right: 1px; }
.sm { width: 22px; height: 22px; color: var(--icon); }
.sm svg { width: 14px; height: 14px; }
.broker { position: relative; display: flex; align-items: center; height: 25px; margin-top: 3px; padding: 0 3px 0 5px; background: var(--ink); flex: none; }
.brand { position: relative; width: 16px; height: 16px; border-radius: 3px; background: #f4f4f4; color: #111; display: flex; align-items: center; justify-content: center; }
.brand::after { content: ""; position: absolute; right: -1px; top: -1px; width: 4px; height: 4px; border-radius: 2px; background: #20b083; }
.brand svg { width: 11px; height: 7px; }
.bname { margin: 0 7px 0 5px; font-size: 9px; }
.operate { height: 17px; padding: 0 8px; border: 1px solid #444; border-radius: 4px; font-size: 9px; }
.favbar { display: flex; align-items: center; justify-content: space-between; position: absolute; left: 364px; top: 0; width: 421px; height: 25px; padding: 0 3px; background: #1b1b1b; border-radius: 3px; color: var(--icon); }
.favbar button { width: 18px; height: 22px; }
.favbar svg { width: 18px; height: 18px; }
.grip { color: #555; width: 9px; }
.end { margin-left: auto; }

.taskbar { display: grid; grid-template-columns: 1fr auto 1fr; align-items: center; height: 32px; background: #212121; border-top: 1px solid #333; flex: none; font-size: 8px; line-height: 10px; color: #e2e2e2; }
.weather { display: flex; align-items: center; gap: 6px; padding-left: 14px; }
.sun { width: 13px; height: 13px; border-radius: 7px; background: linear-gradient(150deg, #f2c037, #ee7420); }
.weather span { color: #b5b5b5; }
.apps-row { display: flex; gap: 2px; }
.apps-row button { position: relative; width: 27px; height: 29px; border-radius: 3px; }
.apps-row svg { width: 16px; height: 16px; }
.win { fill: #45bdf0; stroke: none; }
.mag { stroke: #ddd; stroke-width: 1.500; fill: #3a3a3a; }
.tv1 { fill: #eee; stroke: none; }
.tv2 { fill: #888; fill-opacity: .85; stroke: none; }
.disc { fill: #5661dd; stroke: none; }
.face { fill: #fff; stroke: none; }
.active { background: #303030; }
.active span { width: 16px; height: 16px; border-radius: 3px; background: #080808; color: #fff; display: flex; align-items: center; justify-content: center; }
.active svg { width: 14px; height: 9px; }
.run::after { content: ""; position: absolute; bottom: 1px; width: 4px; height: 2px; background: #888; border-radius: 1px; }
.active::after { width: 11px; background: #3cc7c4; }
.tray { display: flex; justify-content: flex-end; align-items: center; gap: 5px; padding-right: 13px; text-align: right; }
.tray svg { width: 12px; height: 12px; }
```
FILE: chart.js
```js
// Each candle: [direction, high, low, body top, body bottom]; d = down, u = up, n = nothing traded.
const bars = `d54,57,55,56 d54,57,55,56 n u60,74,61,61 d65,78,66,66 n d70,76,71,71 n n d85,100,86,86 d62,75,64,64 u54,74,60,60 d54,62,55,55 d62,73,63,63 d70,78,71,71 d78,103,79,79 d97,104,99,99
d97,107,100,107 d103,121,105,117 d111,123,117,118 d116,131,117,129 d115,130,125,129 d117,132,126,130 d128,146,130,142 d141,178,142,174 d164,196,174,196 d192,228,196,219 d212,235,221,230 u217,241,221,230 u189,225,190,224 d187,220,190,205 u181,215,184,207 d180,213,184,209 u192,209,193,209 d187,209,193,198 d192,204,197,199 d187,223,195,213 d210,246,214,240 d230,248,241,244 u229,259,232,246 u211,233,215,233 d202,257,216,243 u204,244,208,243 u186,208,187,208 d184,198,188,193 d178,218,192,196 u172,197,188,196 d184,201,184,187 u163,187,177,187 u160,178,166,178 u148,168,149,168 d149,164,150,159 d153,172,158,172 d172,184,173,181 u161,184,162,180 d159,179,162,179 d178,203,178,189 u162,189,169,189 d168,198,168,188 d186,202,187,191 u166,203,175,192 d158,229,173,215 d196,229,214,221 d219,253,221,243 u228,274,232,243 d231,268,234,262 u222,267,223,261 d209,227,222,224 u193,224,196,223 d192,211,196,208 u195,222,201,209 u182,220,195,201 u183,206,185,197 d175,201,185,192 d186,204,192,200 u180,200,182,199 d177,198,183,196 d187,202,192,198 d190,212,198,201 d189,210,200,202 d190,205,201,202 u190,208,194,205 d184,203,194,199 d196,208,198,201 d195,206,196,206 d206,228,206,227 d220,241,227,240 u223,243,235,240 u219,242,230,235 u203,252,211,230
d167,322,212,284 u260,324,268,284 u243,299,261,268 d251,314,261,290 d275,319,288,308 u276,329,300,308 u250,343,258,300 u219,259,240,258 u206,261,228,242 d219,265,230,253 d235,306,253,279 u254,293,256,281 d254,323,255,299 u282,328,283,300 u234,290,265,283 d262,340,266,328 u291,354,316,329 d309,412,316,362 u312,368,320,361 d293,366,320,351 d346,428,350,411 d401,465,411,455 u423,474,427,456 u359,428,372,427 u278,390,285,372 u251,288,281,287 u245,300,272,282 u241,271,251,270 u220,254,233,251 d205,239,232,234 d226,266,230,237 d212,251,233,236 d231,287,235,276 u235,278,241,276 d226,272,239,266 d261,302,262,286 u228,288,248,286 d242,318,247,278 d256,288,275,287 d279,315,285,312 d303,349,313,340 u295,354,301,340 u262,305,278,301 u266,302,273,280 u253,285,261,272 d249,317,261,302 d294,320,302,305 d284,338,305,338 u318,346,328,337 u302,339,322,328 d306,336,322,334 u290,334,313,334 u297,334,303,315 d297,331,302,318 u300,344,303,318 u276,311,294,304 d274,331,292,319 d308,339,318,324 d297,334,325,327 d312,335,325,331 d327,390,329,373 d353,411,372,391 d387,418,388,408 u354,408,369,408 u334,386,340,369 u264,348,265,340 d221,280,242,266 d260,306,265,295 d278,317,295,303 u287,325,288,304 d273,313,289,311 d300,335,309,331 d303,331,327,330 u312,334,315,326 u270,315,288,315 d278,336,288,329 u310,351,314,327 d301,325,314,316 d283,316,312,313 u293,319,302,312 d267,306,297,301 u280,297,286,297`;
const sideBars = `u180,375,191,360 d102,241,191,231 d225,287,226,265 d225,281,254,259 u235,286,236,260 d219,298,241,297 d275,325,275,315 u286,325,303,320 u258,309,263,309 u180,265,236,265 d214,303,225,280 d270,325,275,290 u247,300,270,290 d231,290,275,285 d275,315,276,290 d253,308,280,296 d275,308,290,298`;

function draw(id, text, firstX, step) {
  const parse = b => [b[0], ...b.slice(1).split(',').map(Number)];
  document.getElementById(id).innerHTML = text.split(/\s+/).map(parse).map(([dir, hi, lo, top, bot], i) => {
    if (dir === 'n') return '';
    const x = Math.round(firstX + i * step);
    const cls = dir === 'u' ? 'bull' : 'bear';
    return `<path class="wick" d="M${x + .5} ${hi}V${lo}"/><rect class="${cls}" x="${x - .5}" y="${top}" width="2" height="${Math.max(1, bot - top)}"/>`;
  }).join('');
}
const step = 55.9 / 15;
draw('main-candles', bars, 380.5 - 90 * step, step);
draw('side-candles', sideBars, 1187, 2.25);
```
